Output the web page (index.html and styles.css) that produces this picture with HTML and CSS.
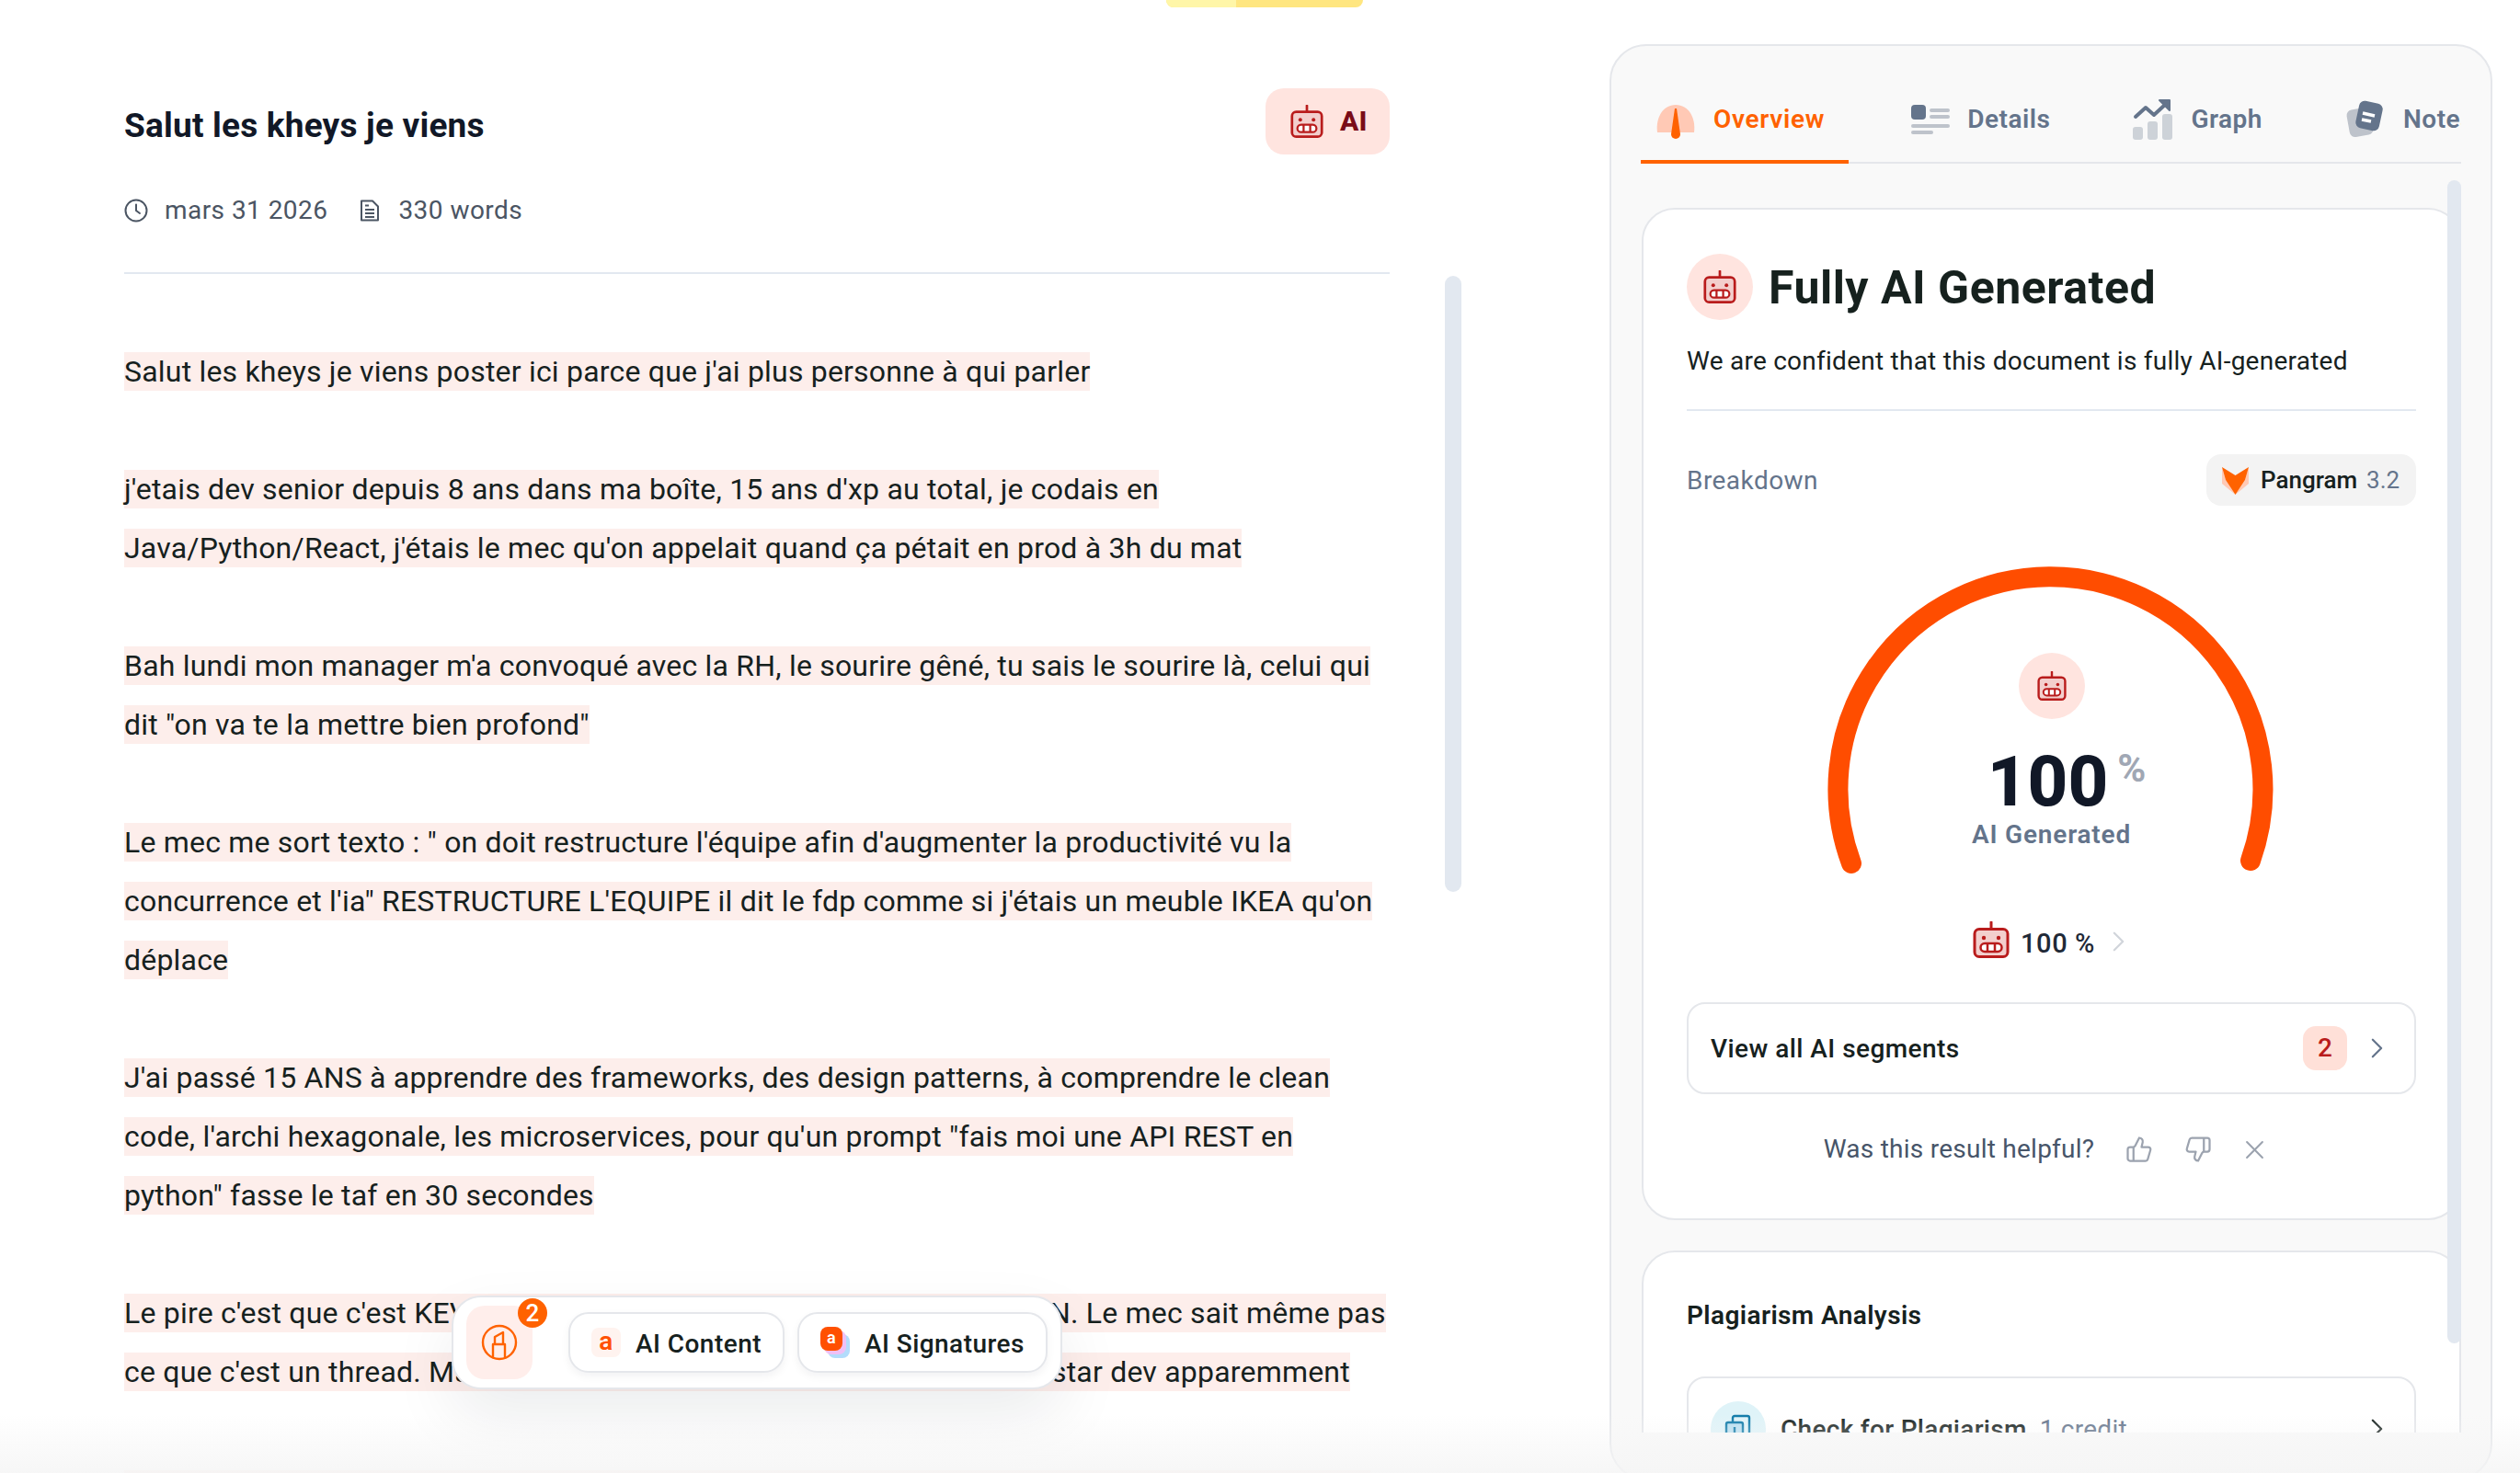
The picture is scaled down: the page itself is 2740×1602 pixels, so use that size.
FILE: index.html
```html
<!DOCTYPE html>
<html lang="fr">
<head>
  <meta charset="UTF-8" />
  <title>Fully AI Generated</title>
  <link rel="stylesheet" href="styles.css">
</head>
<body>
  <svg class="defs" width="0" height="0">
    <symbol id="robot" viewBox="0 0 40 40">
      <path d="M20 1v8" fill="none" stroke="#b91c1c" stroke-width="3" stroke-linecap="round"/>
      <rect x="2" y="8.5" width="36" height="30" rx="5" fill="#f3cfcd" stroke="#b91c1c" stroke-width="3"/>
      <circle cx="12" cy="18" r="2.2" fill="#b91c1c"/>
      <circle cx="28" cy="18" r="2.2" fill="#b91c1c"/>
      <rect x="8.5" y="24" width="23" height="9" rx="4.5" fill="#fff" stroke="#b91c1c" stroke-width="2.5"/>
      <path d="M16 24v9M24 24v9" stroke="#b91c1c" stroke-width="2.5"/>
    </symbol>
    <symbol id="chevron" viewBox="0 0 14 24">
      <path d="M2 2l10 10L2 22" fill="none" stroke="currentColor" stroke-width="2.4" stroke-linecap="round" stroke-linejoin="round"/>
    </symbol>
  </svg>

  <div class="top-tab"><span class="top-tab-left"></span></div>

  <main class="doc">
    <header class="doc-head">
      <h1 class="doc-title">Salut les kheys je viens</h1>
      <div class="ai-badge">
        <svg class="icon-36"><use href="#robot"/></svg>
        <span>AI</span>
      </div>
    </header>
    <div class="doc-meta">
      <svg class="meta-icon" viewBox="0 0 26 26" fill="none" stroke="#4b5563" stroke-width="2" stroke-linecap="round">
        <circle cx="13" cy="13" r="11.5"/><path d="M13 6.5V13l4 3"/>
      </svg>
      <span class="meta-date">mars 31 2026</span>
      <svg class="meta-icon" viewBox="0 0 26 26" fill="none" stroke="#4b5563" stroke-width="2" stroke-linejoin="round">
        <path d="M4 2.5h12l6 6v15H4z"/><path d="M8 12h10M8 16h10M8 20h10M8 7.5h4"/>
      </svg>
      <span>330 words</span>
    </div>

    <article class="doc-text">
      <p><mark>Salut les kheys je viens poster ici parce que j'ai plus personne à qui parler</mark></p>
      <p><mark>j'etais dev senior depuis 8 ans dans ma boîte, 15 ans d'xp au total, je codais en</mark><br><mark>Java/Python/React, j'étais le mec qu'on appelait quand ça pétait en prod à 3h du mat</mark></p>
      <p><mark>Bah lundi mon manager m'a convoqué avec la RH, le sourire gêné, tu sais le sourire là, celui qui</mark><br><mark>dit "on va te la mettre bien profond"</mark></p>
      <p><mark>Le mec me sort texto : " on doit restructure l'équipe afin d'augmenter la productivité vu la</mark><br><mark>concurrence et l'ia" RESTRUCTURE L'EQUIPE il dit le fdp comme si j'étais un meuble IKEA qu'on</mark><br><mark>déplace</mark></p>
      <p><mark>J'ai passé 15 ANS à apprendre des frameworks, des design patterns, à comprendre le clean</mark><br><mark>code, l'archi hexagonale, les microservices, pour qu'un prompt "fais moi une API REST en</mark><br><mark>python" fasse le taf en 30 secondes</mark></p>
      <p><mark>Le pire c'est que c'est KEVIN le stagiaire qui reprend mon projet en JUIN. Le mec sait même pas</mark><br><mark>ce que c'est un thread. Mais il a un compte GPT donc c'est le nouveau star dev apparemment</mark></p>
      <p><mark>Moi j'ai 38 ans, un crédit sur 25 ans, deux gosses et plus aucune idée de quoi faire de ma vie là</mark></p>
    </article>
  </main>

  <div class="doc-scroll"></div>

  <div class="toolbar">
    <div class="tool-main">
      <svg class="icon-40" viewBox="0 0 40 40" fill="none" stroke="#ff6200" stroke-width="2.4" stroke-linejoin="round">
        <circle cx="20" cy="20" r="18"/>
        <path d="M13 36V22h13v14"/>
        <path d="M15 22v-8l9-5v13"/>
      </svg>
      <span class="tool-count">2</span>
    </div>
    <button class="tool-btn">
      <span class="tool-a">a</span>
      <span class="tool-label">AI Content</span>
    </button>
    <button class="tool-btn">
      <span class="tool-stack">
        <span class="stack-blue"></span>
        <span class="stack-pink"></span>
        <span class="stack-top">a</span>
      </span>
      <span class="tool-label">AI Signatures</span>
    </button>
  </div>

  <aside class="panel">
    <nav class="tabs">
      <div class="tab tab-active">
        <svg class="tab-icon" viewBox="0 0 44 44">
          <path d="M2 36C0 20 8 6 22 6s22 14 20 30z" fill="#ffc9b5"/>
          <path d="M21 10l2 0 4 28a5 5 0 1 1-10 0z" fill="#ff6200"/>
        </svg>
        Overview
      </div>
      <div class="tab">
        <svg class="tab-icon" viewBox="0 0 44 44">
          <rect x="2" y="6" width="16" height="16" rx="4" fill="#64748b"/>
          <g fill="#bec3cb">
            <rect x="22" y="10" width="22" height="4" rx="2"/>
            <rect x="22" y="17" width="22" height="4" rx="2"/>
            <rect x="2" y="27" width="42" height="4" rx="2"/>
            <rect x="2" y="34" width="24" height="4" rx="2"/>
          </g>
        </svg>
        Details
      </div>
      <div class="tab">
        <svg class="tab-icon" viewBox="0 0 44 44">
          <g fill="#cdd2d8">
            <rect x="0" y="30" width="11" height="14" rx="3"/>
            <rect x="16" y="24" width="11" height="20" rx="3"/>
            <rect x="32" y="16" width="11" height="28" rx="3"/>
          </g>
          <path d="M3 19l11-10 9 8 13-12" fill="none" stroke="#64748b" stroke-width="4" stroke-linecap="round" stroke-linejoin="round"/>
          <path d="M29 1h11v11z" fill="#64748b" stroke="#64748b" stroke-width="2" stroke-linejoin="round"/>
        </svg>
        Graph
      </div>
      <div class="tab">
        <svg class="tab-icon" viewBox="0 0 44 44">
          <rect x="3" y="10" width="26" height="30" rx="6" transform="rotate(-10 16 25)" fill="#bec3cb"/>
          <rect x="13" y="3" width="26" height="30" rx="6" transform="rotate(12 26 18)" fill="#64748b"/>
          <path d="M19 15l13 3M18 22l10 2" stroke="#fff" stroke-width="3.5"/>
        </svg>
        Notes
      </div>
    </nav>

    <div class="panel-body">
      <section class="card">
        <div class="verdict">
          <span class="robot-circle"><svg class="icon-36"><use href="#robot"/></svg></span>
          <h2>Fully AI Generated</h2>
        </div>
        <p class="verdict-sub">We are confident that this document is fully AI-generated</p>
        <hr class="card-rule">
        <div class="breakdown">
          <span class="breakdown-label">Breakdown</span>
          <span class="model-chip">
            <svg class="fox" viewBox="0 0 29 32">
              <path d="M0 2l4 14 10.5 16L0 20zM29 2l-4 14-10.5 16L29 20z" fill="#ffc9b5"/>
              <path d="M0 2l14.5 9L29 2l-4 14-10.5 16L4 16z" fill="#ff6200"/>
            </svg>
            <b>Pangram</b>
            <span class="model-ver">3.2</span>
          </span>
        </div>

        <div class="gauge">
          <svg class="gauge-arc" viewBox="0 0 488 340">
            <path d="M27 323A231 231 0 1 1 461 320" fill="none" stroke="#ff4d00" stroke-width="22" stroke-linecap="round"/>
          </svg>
          <span class="robot-circle"><svg class="icon-32"><use href="#robot"/></svg></span>
          <div class="gauge-num">100<span class="gauge-pct">%</span></div>
          <div class="gauge-label">AI Generated</div>
        </div>

        <div class="score-row">
          <svg class="icon-40"><use href="#robot"/></svg>
          <span class="score-val">100 %</span>
          <svg class="chevron chevron-light"><use href="#chevron"/></svg>
        </div>

        <div class="row-box">
          <span class="row-title">View all AI segments</span>
          <span class="row-count">2</span>
          <svg class="chevron"><use href="#chevron"/></svg>
        </div>

        <div class="helpful">
          <span>Was this result helpful?</span>
          <svg class="thumb" viewBox="0 0 24 24" fill="none" stroke="#9ca3af" stroke-width="1.8" stroke-linejoin="round">
            <path d="M7 10v12"/>
            <path d="M15 5.88 14 10h5.83a2 2 0 0 1 1.92 2.56l-2.33 8A2 2 0 0 1 17.5 22H4a2 2 0 0 1-2-2v-8a2 2 0 0 1 2-2h2.76a2 2 0 0 0 1.79-1.11L12 2a3.13 3.13 0 0 1 3 3.88Z"/>
          </svg>
          <svg class="thumb" viewBox="0 0 24 24" fill="none" stroke="#9ca3af" stroke-width="1.8" stroke-linejoin="round">
            <path d="M17 14V2"/>
            <path d="M9 18.12 10 14H4.17a2 2 0 0 1-1.92-2.56l2.33-8A2 2 0 0 1 6.5 2H20a2 2 0 0 1 2 2v8a2 2 0 0 1-2 2h-2.76a2 2 0 0 0-1.79 1.11L12 22a3.13 3.13 0 0 1-3-3.88Z"/>
          </svg>
          <svg class="close" viewBox="0 0 20 20" fill="none" stroke="#9ca3af" stroke-width="2" stroke-linecap="round">
            <path d="M2 2l16 16M18 2L2 18"/>
          </svg>
        </div>
      </section>

      <section class="card card-plag">
        <h3>Plagiarism Analysis</h3>
        <div class="row-box row-plag">
          <span class="plag-circle">
            <svg class="icon-32" viewBox="0 0 32 32" fill="none" stroke="#0e7aa8" stroke-width="2.4">
              <rect x="10" y="2" width="18" height="24" rx="2"/>
              <rect x="3" y="9" width="18" height="21" rx="2" fill="#b9dff0"/>
              <path d="M12 14v8M12 25v2"/>
            </svg>
          </span>
          <span class="row-title">Check for Plagiarism</span>
          <span class="plag-credit">1 credit</span>
          <svg class="chevron chevron-dark"><use href="#chevron"/></svg>
        </div>
      </section>
    </div>
  </aside>

  <div class="bottom-fade"></div>
</body>
</html>
```
FILE: styles.css
```css
* { box-sizing: border-box; }

html, body {
  margin: 0;
  height: 1602px;
  overflow: hidden;
}

body {
  display: flex;
  align-items: flex-start;
  background: #fff;
  color: #16211e;
  font-family: "Roboto", "Noto Sans", sans-serif;
  font-size: 28px;
  line-height: 40px;
  letter-spacing: 0.25px;
  position: relative;
}

.defs { position: absolute; }

.icon-32 { width: 32px; height: 32px; }
.icon-36 { width: 36px; height: 36px; }
.icon-40 { width: 40px; height: 40px; }

/* === Left document === */
.top-tab {
  position: absolute;
  left: 1268px;
  top: 0;
  width: 214px;
  height: 8px;
  background: #ffe680;
  border-radius: 0 0 20px 20px;
  overflow: hidden;
}

.top-tab-left {
  display: block;
  width: 76px;
  height: 100%;
  background: #fff6a8;
}

.doc {
  width: 1511px;
  padding: 96px 0 0 135px;
  flex-shrink: 0;
  height: 1602px;
  overflow: hidden;
}

.doc-head {
  display: flex;
  justify-content: space-between;
  align-items: center;
  height: 72px;
}

.doc-title {
  margin: 10px 0 0;
  font-size: 37px;
  font-weight: 700;
  letter-spacing: 0.2px;
  color: #111827;
}

.ai-badge {
  display: flex;
  align-items: center;
  gap: 18px;
  width: 135px;
  height: 72px;
  padding-left: 27px;
  background: #ffe4df;
  border-radius: 20px;
  color: #7a0c18;
  font-size: 30px;
  font-weight: 800;
}

.doc-meta {
  display: flex;
  align-items: center;
  margin-top: 41px;
  height: 40px;
  color: #4b5563;
  letter-spacing: 0.45px;
}

.meta-icon { width: 26px; height: 26px; margin-right: 18px; }
.meta-date { margin-right: 33px; }

.doc-text {
  margin-top: 47px;
  padding-top: 74px;
  border-top: 2px solid #e2e8f0;
  font-size: 32px;
  line-height: 64px;
  letter-spacing: 0.2px;
  white-space: nowrap;
}

.doc-text p { margin: 0 0 64px; }

.doc-text mark {
  background: #fdeeeb;
  color: inherit;
  padding: 2px 0;
}

.doc-scroll {
  position: absolute;
  left: 1571px;
  top: 300px;
  width: 18px;
  height: 670px;
  border-radius: 9px;
  background: #e2e8f0;
}

/* === Floating toolbar === */
.toolbar {
  position: absolute;
  left: 491px;
  top: 1409px;
  width: 664px;
  height: 102px;
  display: flex;
  align-items: center;
  padding-left: 14px;
  background: #fff;
  border: 2px solid #e5e7eb;
  border-radius: 32px;
  box-shadow: 0 30px 70px rgba(15, 23, 42, 0.08);
}

.tool-main {
  position: relative;
  display: flex;
  align-items: center;
  justify-content: center;
  width: 72px;
  height: 80px;
  margin-right: 39px;
  background: #ffeeeb;
  border-radius: 20px;
}

.tool-count {
  position: absolute;
  right: -16px;
  top: -8px;
  width: 32px;
  height: 32px;
  border-radius: 50%;
  background: #ff6200;
  color: #fff;
  font-size: 26px;
  line-height: 32px;
  font-weight: 500;
  text-align: center;
}

.tool-btn {
  display: flex;
  align-items: center;
  gap: 16px;
  height: 66px;
  padding: 0 23px;
  margin-right: 14px;
  background: #fff;
  border: 2px solid #e5e7eb;
  border-radius: 22px;
  box-shadow: 0 4px 10px rgba(15, 23, 42, 0.05);
  color: #16211e;
  font: 500 28px "Roboto", sans-serif;
  letter-spacing: 0.45px;
}

.tool-label { padding-top: 2px; }

.tool-a {
  width: 32px;
  height: 32px;
  background: #fff3ef;
  border-radius: 8px;
  color: #ff5000;
  font-weight: 600;
  line-height: 30px;
  text-align: center;
}

.tool-stack {
  position: relative;
  width: 32px;
  height: 34px;
}

.tool-stack span {
  position: absolute;
  width: 24px;
  height: 26px;
  border-radius: 8px;
}

.stack-blue { left: 8px; top: 8px; background: #b3dcfb; }
.stack-pink { left: 4px; top: 4px; background: #f0c0f5; }

.tool-stack .stack-top {
  left: 0;
  top: 0;
  background: #ff5000;
  color: #fff;
  font-size: 18px;
  font-weight: 600;
  line-height: 24px;
  text-align: center;
}

/* === Right panel === */
.panel {
  margin: 48px 0 0 239px;
  width: 960px;
  height: 1562px;
  flex-shrink: 0;
  background: #f9f9f9;
  border: 2px solid #e5e7eb;
  border-radius: 40px;
  padding: 0 32px;
}

.tabs {
  display: flex;
  gap: 50px;
  height: 128px;
  overflow: hidden;
  background: linear-gradient(#e5e7eb, #e5e7eb) bottom / 100% 2px no-repeat;
}

.tab {
  display: flex;
  align-items: center;
  gap: 19px;
  height: 128px;
  padding: 36px 24px 0 16px;
  flex-shrink: 0;
  border-bottom: 4px solid transparent;
  color: #64748b;
  font-weight: 600;
  letter-spacing: 0.5px;
}

.tab-active {
  color: #ff6200;
  border-bottom-color: #ff6200;
  letter-spacing: 0.7px;
  padding-right: 26px;
}

.tab-icon { width: 44px; height: 44px; }

.panel-body {
  position: relative;
  height: 1380px;
  padding: 48px 0 0 1px;
  overflow: hidden;
}

.panel-body::after {
  content: "";
  position: absolute;
  right: 0;
  top: 18px;
  width: 15px;
  height: 1265px;
  border-radius: 8px;
  background: #e2e8f0;
}

.card {
  background: #fff;
  border: 2px solid #e5e7eb;
  border-radius: 36px;
  padding: 48px 47px 55px;
}

.verdict {
  display: flex;
  align-items: center;
  gap: 17px;
}

.verdict h2 {
  margin: 2px 0 0;
  font-size: 50px;
  line-height: 70px;
  font-weight: 700;
  letter-spacing: 0.5px;
}

.robot-circle {
  display: flex;
  align-items: center;
  justify-content: center;
  width: 72px;
  height: 72px;
  border-radius: 50%;
  background: #ffe4df;
  flex-shrink: 0;
}

.verdict-sub { margin: 25px 0 0; }

.card-rule {
  margin: 32px 0 0;
  border: 0;
  height: 2px;
  background: #e2e8f0;
}

.breakdown {
  display: flex;
  justify-content: space-between;
  align-items: center;
  margin-top: 47px;
}

.breakdown-label { color: #64748b; padding-top: 2px; letter-spacing: 0.45px; }

.model-chip {
  display: flex;
  align-items: center;
  height: 56px;
  width: 228px;
  padding-left: 17px;
  background: #f3f3f3;
  border-radius: 16px;
  font-size: 26px;
  letter-spacing: 0;
}

.model-chip b { font-weight: 500; margin: 0 10px 0 13px; }

.fox { width: 29px; height: 32px; }

.model-ver { color: #64748b; }

.gauge {
  position: relative;
  display: flex;
  flex-direction: column;
  align-items: center;
  height: 360px;
  margin-top: 66px;
  padding-top: 94px;
}

.gauge-arc {
  position: absolute;
  left: 152px;
  top: 0;
  width: 488px;
  height: 340px;
}

.gauge-num {
  position: relative;
  margin: 32px 8px 0 0;
  font-size: 76px;
  line-height: 72px;
  font-weight: 800;
  letter-spacing: 0;
  color: #111827;
}

.gauge-pct {
  position: absolute;
  left: 100%;
  top: -2px;
  margin-left: 10px;
  font-size: 42px;
  line-height: 48px;
  font-weight: 700;
  color: #a0a7b4;
}

.gauge-label {
  margin-top: 2px;
  font-weight: 600;
  letter-spacing: 0.8px;
  color: #64748b;
}

.score-row {
  display: flex;
  align-items: center;
  justify-content: center;
  gap: 12px;
  margin: 26px 6px 0 0;
  height: 40px;
  font-weight: 500;
  color: #1f2937;
}

.score-val { padding-top: 8px; font-size: 29px; letter-spacing: 0.6px; }

.chevron {
  width: 13px;
  height: 24px;
  color: #64748b;
}

.chevron-light { color: #d1d5db; margin: 0 0 -3px 7px; }
.chevron-dark { color: #16211e; }

.row-box {
  display: flex;
  align-items: center;
  margin-top: 48px;
  height: 100px;
  padding: 0 34px 0 24px;
  border: 2px solid #e5e7eb;
  border-radius: 20px;
}

.row-title {
  flex: 1;
  font-weight: 500;
  letter-spacing: 0.45px;
  padding-top: 2px;
}

.row-count {
  width: 48px;
  height: 48px;
  margin-right: 26px;
  border-radius: 14px;
  background: #ffe0d8;
  color: #b91c1c;
  font-weight: 500;
  line-height: 48px;
  text-align: center;
}

.helpful {
  display: flex;
  align-items: center;
  justify-content: center;
  margin-top: 40px;
  padding-right: 16px;
  height: 40px;
  color: #475569;
}

.thumb { width: 30px; height: 30px; margin-left: 34px; }
.close { width: 21px; height: 21px; margin-left: 36px; }

.card-plag { padding-top: 47px; margin-top: 33px; }

.card-plag h3 {
  margin: 2px 0 -2px;
  font-size: 28px;
  font-weight: 600;
  letter-spacing: 0.4px;
}

.row-plag { margin-top: 48px; height: 114px; }

.row-plag .row-title { flex: none; letter-spacing: 0.3px; }

.plag-circle {
  display: flex;
  align-items: center;
  justify-content: center;
  width: 60px;
  height: 60px;
  margin-right: 16px;
  border-radius: 50%;
  background: #dff3f8;
}

.plag-credit {
  flex: 1;
  margin-left: 14px;
  padding-top: 2px;
  color: #64748b;
}

/* fade laid over the bottom of the window */
.bottom-fade {
  position: absolute;
  left: 0;
  right: 0;
  bottom: 0;
  height: 64px;
  background: linear-gradient(rgba(245, 245, 245, 0), rgba(245, 245, 245, 0.85));
  pointer-events: none;
}
```
